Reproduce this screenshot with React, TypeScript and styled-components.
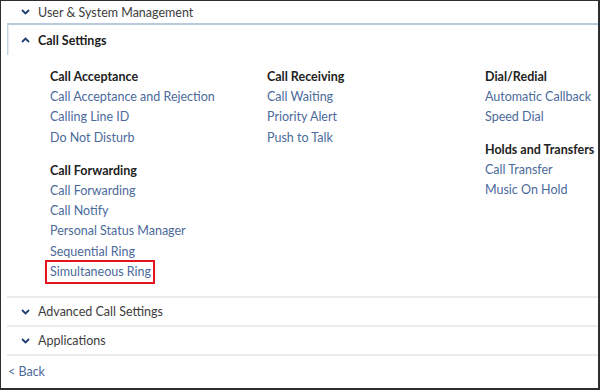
import React from "react";
import styled, { createGlobalStyle } from "styled-components";

const GlobalStyle = createGlobalStyle`
  body {
    margin: 0;
    background: #ffffff;
    font-family: "Lato", "Noto Sans", sans-serif;
  }
`;

const Frame = styled.div`
  width: 600px;
  height: 390px;
  box-sizing: border-box;
  border: 1px solid #2e2e2e;
  border-right-width: 2px;
  border-bottom-width: 2px;
  background: #fff;
  padding-left: 6px;
  overflow: hidden;
  display: flex;
  flex-direction: column;
`;

const Section = styled.div<{ $open?: boolean }>`
  border-bottom: 2px solid #ececec;
  ${p => p.$open && `border-top: 2px solid #bac9dc;`}
`;

const Header = styled.div<{ $open?: boolean }>`
  height: ${p => (p.$open ? "30px" : "27px")};
  display: flex;
  align-items: center;
  gap: 8px;
  padding-left: 14px;
  font-size: 12.5px;
  color: ${p => (p.$open ? "#1c1c1c" : "#3d3d3d")};
  font-weight: ${p => (p.$open ? 700 : 400)};
  ${p => p.$open && `box-shadow: inset 1px 0 0 #c5d3e4, inset 2px 0 1px #e6ecf4;`}
`;

const TopHeader = styled(Header)`
  height: 22px;
`;

const Chevron = ({ up }: { up?: boolean }) => (
  <svg width="9" height="6" viewBox="0 0 9 6">
    <path
      d={up ? "M1 5 L4.5 1.5 L8 5" : "M1 1 L4.5 4.5 L8 1"}
      fill="none"
      stroke="#1f3f73"
      strokeWidth="1.8"
    />
  </svg>
);

const Body = styled.div`
  display: grid;
  grid-template-columns: 217px 218px 1fr;
  padding: 12px 0 14px 43px;
`;

const Column = styled.div<{ $gap: number }>`
  display: flex;
  flex-direction: column;
  gap: ${p => p.$gap}px;
`;

const Group = styled.div`
  display: flex;
  flex-direction: column;
`;

const GroupTitle = styled.div`
  font-size: 12.5px;
  font-weight: 700;
  color: #222;
  line-height: 20px;
  white-space: nowrap;
`;

const Link = styled.a<{ $boxed?: boolean }>`
  font-size: 12.5px;
  color: #4b6a9b;
  line-height: 20.3px;
  text-decoration: none;
  white-space: nowrap;
  align-self: flex-start;
  ${p =>
    p.$boxed &&
    `
    outline: 2px solid #e3141b;
    padding: 0 2px 0 3px;
    margin-left: -3px;
  `}
`;

const Back = styled.a`
  font-size: 12.5px;
  color: #4b6a9b;
  padding: 8px 0 0 1px;
  text-decoration: none;
`;

type GroupData = { title: string; links: string[] };

const columns: { gap: number; groups: GroupData[] }[] = [
  {
    gap: 13,
    groups: [
      {
        title: "Call Acceptance",
        links: ["Call Acceptance and Rejection", "Calling Line ID", "Do Not Disturb"],
      },
      {
        title: "Call Forwarding",
        links: [
          "Call Forwarding",
          "Call Notify",
          "Personal Status Manager",
          "Sequential Ring",
          "Simultaneous Ring",
        ],
      },
    ],
  },
  {
    gap: 13,
    groups: [
      {
        title: "Call Receiving",
        links: ["Call Waiting", "Priority Alert", "Push to Talk"],
      },
    ],
  },
  {
    gap: 12,
    groups: [
      { title: "Dial/Redial", links: ["Automatic Callback", "Speed Dial"] },
      { title: "Holds and Transfers", links: ["Call Transfer", "Music On Hold"] },
    ],
  },
];

export default function App() {
  return (
    <>
      <GlobalStyle />
      <Frame>
        <TopHeader>
          <Chevron />
          User &amp; System Management
        </TopHeader>
        <Section $open>
          <Header $open>
            <Chevron up />
            Call Settings
          </Header>
          <Body>
            {columns.map((col, i) => (
              <Column key={i} $gap={col.gap}>
                {col.groups.map(g => (
                  <Group key={g.title}>
                    <GroupTitle>{g.title}</GroupTitle>
                    {g.links.map(l => (
                      <Link key={l} href="#" $boxed={l === "Simultaneous Ring"}>
                        {l}
                      </Link>
                    ))}
                  </Group>
                ))}
              </Column>
            ))}
          </Body>
        </Section>
        <Section>
          <Header>
            <Chevron />
            Advanced Call Settings
          </Header>
        </Section>
        <Section>
          <Header>
            <Chevron />
            Applications
          </Header>
        </Section>
        <Back href="#">&lt; Back</Back>
      </Frame>
    </>
  );
}
